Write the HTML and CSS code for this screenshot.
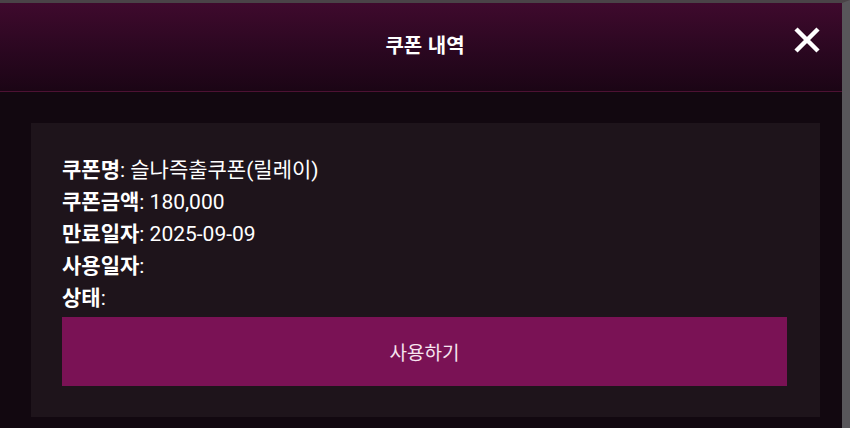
FILE: index.html
```html
<!DOCTYPE html>
<html lang="ko">
<head>
<meta charset="utf-8">
<link rel="stylesheet" href="styles.css">
</head>
<body>
<div class="page">
  <header class="header">
    <h1 class="title">쿠폰 내역</h1>
    <button class="close" aria-label="닫기">
      <svg width="28" height="28" viewBox="0 0 28 28"><path d="M3 3 L25 25 M25 3 L3 25" stroke="#fff" stroke-width="4.5" stroke-linecap="butt"/></svg>
    </button>
  </header>
  <main class="content">
    <section class="card">
      <div class="row"><b>쿠폰명</b>: 슬나즉출쿠폰(릴레이)</div>
      <div class="row"><b>쿠폰금액</b>: 180,000</div>
      <div class="row"><b>만료일자</b>: 2025-09-09</div>
      <div class="row"><b>사용일자</b>:</div>
      <div class="row"><b>상태</b>:</div>
      <button class="use">사용하기</button>
    </section>
  </main>
</div>
</body>
</html>
```
FILE: styles.css
```css
html, body { margin: 0; padding: 0; }
body {
  background: #120810;
  font-family: "Roboto", "Noto Sans CJK KR", sans-serif;
  color: #fff;
  width: 850px;
  height: 428px;
  overflow: hidden;
}
.page {
  height: 425px;
  border-top: 3px solid #4a4347;
  border-right: 8px solid #58565a;
  box-sizing: content-box;
  width: 842px;
}
.header {
  position: relative;
  height: 88px;
  background: linear-gradient(180deg, #3f0a2d 0%, #2a0720 55%, #1b0515 100%);
  border-bottom: 1px solid #4d1233;
  display: flex;
  align-items: center;
  justify-content: center;
}
.title {
  margin: 0;
  font-family: "Noto Sans CJK KR", sans-serif;
  font-size: 20px;
  font-weight: 700;
  color: #fff;
  padding-left: 8px;
  margin-top: -6px;
}
.close {
  position: absolute;
  right: 21px;
  top: 23px;
  background: none;
  border: 0;
  padding: 0;
  width: 28px;
  height: 28px;
  cursor: pointer;
}
.close svg { display: block; }
.content {
  padding: 31px 22px 0 31px;
}
.card {
  background: #1e141b;
  padding: 29px 33px 31px 31px;
}
.row {
  font-size: 21px;
  line-height: 32px;
  height: 32px;
  white-space: nowrap;
  color: #fff;
}
.row b {
  font-family: "Noto Sans CJK KR", sans-serif;
  font-weight: 700;
}
.use {
  display: block;
  width: 100%;
  height: 69px;
  margin-top: 5px;
  background: #7a1255;
  border: 0;
  color: #f6e4ef;
  font-family: "Noto Sans CJK KR", sans-serif;
  font-size: 19px;
  font-weight: 400;
}
```
